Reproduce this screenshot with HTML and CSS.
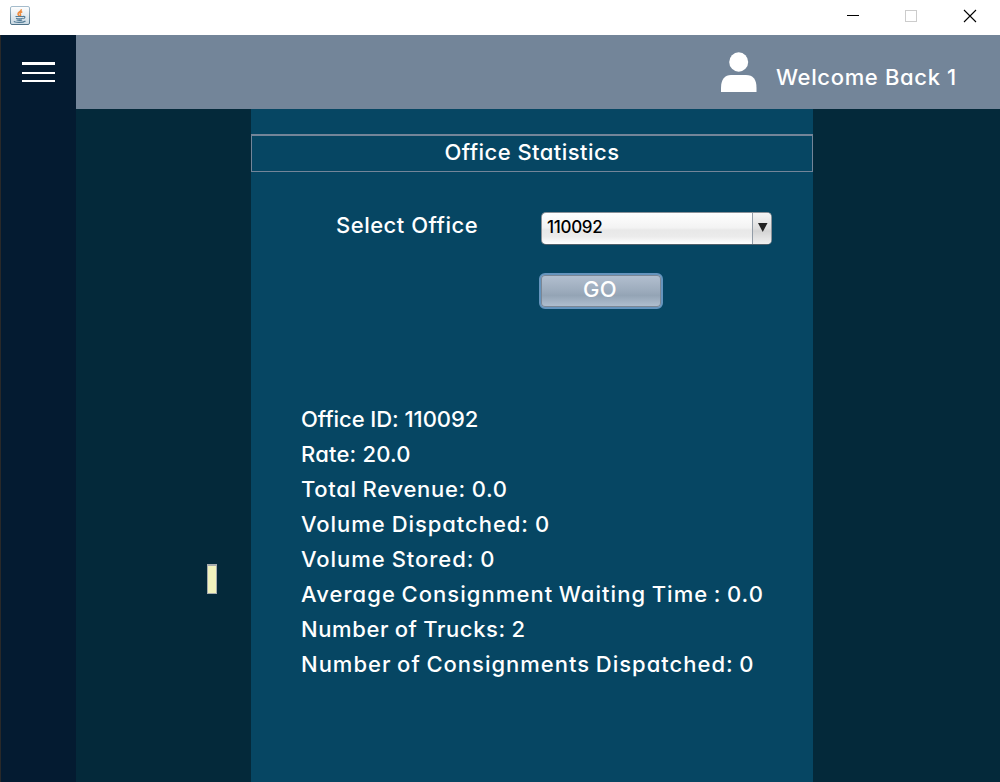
FILE: index.html
```html
<!DOCTYPE html>
<html lang="en">
<head>
<meta charset="utf-8">
<title>Office Statistics</title>
<link rel="stylesheet" href="styles.css">
</head>
<body>
<div class="window">
  <div class="titlebar">
    <svg class="java" width="20" height="20" viewBox="0 0 20 20">
      <defs><linearGradient id="jb" x1="0" y1="0" x2="0" y2="1"><stop offset="0" stop-color="#fff"/><stop offset="1" stop-color="#c9d8e2"/></linearGradient>
      <linearGradient id="je" x1="0" y1="0" x2="0" y2="1"><stop offset="0" stop-color="#a5bccc"/><stop offset="1" stop-color="#4f7288"/></linearGradient></defs>
      <rect x=".5" y=".5" width="19" height="18" rx="1.5" fill="url(#jb)" stroke="url(#je)"/>
      <path d="M11.2 3.200c.8 2.200-3.400 2.600-3.200 4.800.1 1 .9 1.600 1.300 2.200M12.300 5.800c-2 .6-2.700 1.500-1.900 2.500.6.700.2 1.300-.4 1.900" fill="none" stroke="#ee8a3c" stroke-width="1.500"/>
      <path d="M5.500 10.500h7.500M6 12.200c2 .7 5 .7 6.800 0M6.500 14c2 .6 4 .6 5.700 0M13 10.500c2.500-.5 2.500 1.500.3 2.300M4 15.200c1 1.600 9 1.600 11.500-.3" fill="none" stroke="#527b96" stroke-width="1.200"/>
    </svg>
    <svg class="controls" width="131" height="14" viewBox="0 0 131 14" shape-rendering="crispEdges">
      <path d="M0 6.500h12" stroke="#000"/>
      <rect x="58.500" y="1.500" width="11" height="11" fill="none" stroke="#ccc"/>
      <path d="M117 1l12 12M129 1l-12 12" stroke="#000" stroke-width="1.100" shape-rendering="auto"/>
    </svg>
  </div>
  <div class="app">
    <nav class="sidebar">
      <div class="menu"><i></i><i></i><i></i></div>
    </nav>
    <div class="main">
      <header class="header">
        <svg class="user" width="36" height="41" viewBox="0 0 36 41"><ellipse cx="17.700" cy="10" rx="9.500" ry="9.700" fill="#fff"/><path d="M0 40v-4c0-9 4-13 10-13h15c7 0 10.500 4 10.500 13v4z" fill="#fff"/></svg>
        <span class="welcome">Welcome Back 1</span>
      </header>
      <div class="content">
        <div class="side"><div class="tip"></div></div>
        <section class="panel">
          <h1 class="title">Office Statistics</h1>
          <div class="field">
            <label class="label">Select Office</label>
            <div class="combo"><span class="value">110092</span><span class="arrow"><svg width="10" height="9" viewBox="0 0 10 9"><path d="M0 0h9.500L4.750 9z" fill="#222"/></svg></span></div>
          </div>
          <button class="go">GO</button>
          <div class="stats">
            <div class="office-id">Office ID: 110092</div>
            <div class="rate">Rate: 20.0</div>
            <div class="revenue">Total Revenue: 0.0</div>
            <div>Volume Dispatched: 0</div>
            <div>Volume Stored: 0</div>
            <div class="waiting">Average Consignment Waiting Time : 0.0</div>
            <div class="trucks">Number of Trucks: 2</div>
            <div class="dispatched">Number of Consignments Dispatched: 0</div>
          </div>
        </section>
      </div>
    </div>
  </div>
</div>
</body>
</html>
```
FILE: styles.css
```css
* { box-sizing: border-box; }
body {
  margin: 0;
  overflow: hidden;
  font-family: Inter, "Open Sans", sans-serif;
  font-feature-settings: "cv11";
  font-size: 22px;
  font-weight: 450;
  color: #fff;
}
.window { height: 782px; display: flex; flex-direction: column; background: #fff; }
.titlebar { height: 35px; display: flex; justify-content: space-between; padding: 6px 22px 0 10px; }
.controls { margin-top: 3px; }
.app { flex: 1; display: flex; border-left: 1px solid #292929; }
.sidebar { width: 75px; background: #041b31; padding: 27px 0 0 21px; }
.menu { width: 33px; height: 20px; display: flex; flex-direction: column; justify-content: space-between; }
.menu i { height: 2px; background: #fff; }
.menu i:first-child { height: 3px; }
.main { flex: 1; display: flex; flex-direction: column; }
.header { height: 74px; background: #738599; display: flex; padding-left: 645px; }
.user { margin-top: 17px; }
.welcome { margin: 24px 0 0 19px; line-height: 36px; letter-spacing: .65px; white-space: nowrap; }
.content { flex: 1; display: flex; background: #04293a; }
.side { width: 175px; padding: 455px 0 0 131px; }
.tip { width: 10px; height: 30px; background: #f1f2bd; border: 1px solid #a7acae; border-top-width: 2px; }
.panel { width: 562px; background: #064663; padding-top: 25px; }
.title { margin: 0; height: 38px; border: 1px solid #738599; border-top-width: 2px; font-size: 22px; font-weight: 450; line-height: 32px; letter-spacing: .45px; text-align: center; }
.field { display: flex; margin-top: 40px; }
.label { width: 205px; margin-left: 85px; line-height: 26px; letter-spacing: .5px; white-space: nowrap; }
.combo { width: 231px; height: 33px; display: flex; border: 1px solid #8b9299; border-bottom-color: #53616b; border-radius: 5px; background: linear-gradient(#fff, #f3f3f3 48%, #e8e8e8 55%, #ebebeb 75%, #fff); color: #000; overflow: hidden; }
.value { flex: 1; padding-left: 5px; font-size: 17px; line-height: 28px; letter-spacing: -.3px; }
.arrow { width: 19px; border-left: 1px solid #929ca7; padding: 10px 0 0 5px; background: linear-gradient(#f5f5f5, #dedede 50%, #d4d4d4 58%, #f0f0f0); line-height: 0; }
.go { display: block; width: 124px; height: 36px; margin: 28px 0 0 288px; padding: 0 2px 4px 0; border: 2px solid #6594bd; border-radius: 6px; background: linear-gradient(#b3c0d0, #9cabbc 50%, #94a4b5 64%, #b2c1d1); box-shadow: inset 0 0 0 1px #7c8795; font: inherit; color: #fff; line-height: 28px; letter-spacing: .4px; }
.stats { margin: 93px 0 0 50px; line-height: 35px; letter-spacing: .95px; word-spacing: -.8px; white-space: nowrap; }
.office-id { letter-spacing: -.06px; word-spacing: 0; }
.rate { letter-spacing: .2px; word-spacing: 0; }
.revenue { letter-spacing: .7px; }
.waiting { letter-spacing: 1.07px; word-spacing: -1.5px; }
.trucks { letter-spacing: .6px; }
.dispatched { letter-spacing: 1px; word-spacing: -1.2px; }
```
